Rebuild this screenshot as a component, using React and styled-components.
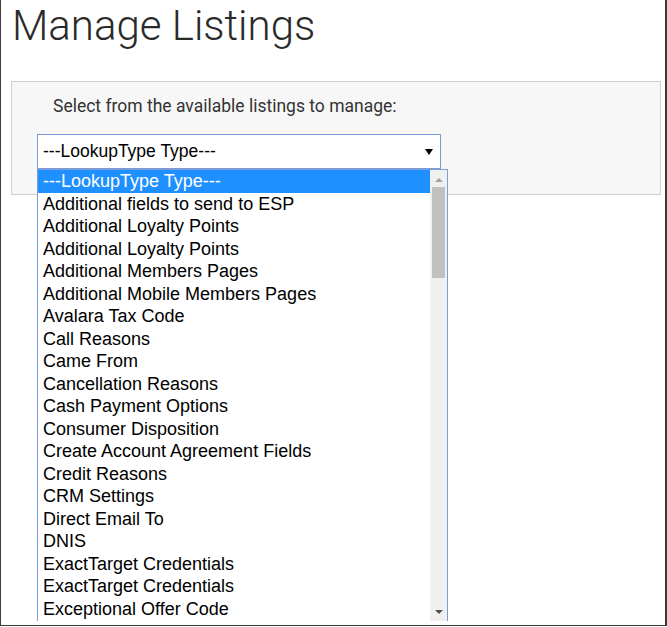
import styled, { createGlobalStyle } from "styled-components";

const GlobalStyle = createGlobalStyle`
  html, body {
    margin: 0;
    padding: 0;
    background: #fff;
  }
  * {
    box-sizing: border-box;
  }
`;

const listings = [
  "---LookupType Type---",
  "Additional fields to send to ESP",
  "Additional Loyalty Points",
  "Additional Loyalty Points",
  "Additional Members Pages",
  "Additional Mobile Members Pages",
  "Avalara Tax Code",
  "Call Reasons",
  "Came From",
  "Cancellation Reasons",
  "Cash Payment Options",
  "Consumer Disposition",
  "Create Account Agreement Fields",
  "Credit Reasons",
  "CRM Settings",
  "Direct Email To",
  "DNIS",
  "ExactTarget Credentials",
  "ExactTarget Credentials",
  "Exceptional Offer Code",
];

export default function App() {
  return (
    <>
      <GlobalStyle />
      <Frame>
        <Title>Manage Listings</Title>
        <Panel>
          <Label>Select from the available listings to manage:</Label>
          <SelectWrap>
            <SelectBox>
              <span>---LookupType Type---</span>
              <Caret />
            </SelectBox>
            <DropList>
              <Options>
                {listings.map((item, i) => (
                  <Option key={i} $active={i === 0}>
                    {item}
                  </Option>
                ))}
              </Options>
              <ScrollBar>
                <ArrowUp />
                <Thumb />
                <ArrowDown />
              </ScrollBar>
            </DropList>
          </SelectWrap>
        </Panel>
      </Frame>
    </>
  );
}

const Frame = styled.div`
  width: 667px;
  height: 626px;
  border-left: 1px solid #3c3c3c;
  border-right: 2px solid #3c3c3c;
  border-bottom: 1px solid #3c3c3c;
  padding: 0 4px 0 10px;
  overflow: hidden;
  position: relative;
`;

const Title = styled.h1`
  margin: 0;
  font-family: Roboto, "Liberation Sans", sans-serif;
  font-weight: 300;
  font-size: 42px;
  line-height: 52px;
  color: #2a2a2a;
  padding-left: 1px;
`;

const Panel = styled.div`
  margin-top: 29px;
  height: 114px;
  background: #f7f7f7;
  border: 1px solid #cfcfcf;
  padding: 12px 0 0 25px;
`;

const Label = styled.div`
  font-family: Roboto, "Liberation Sans", sans-serif;
  font-size: 17.5px;
  line-height: 24px;
  color: #333;
  padding-left: 16px;
`;

const SelectWrap = styled.div`
  position: relative;
  margin-top: 16px;
  width: 404px;
`;

const SelectBox = styled.div`
  height: 35px;
  display: flex;
  align-items: center;
  justify-content: space-between;
  background: #fff;
  border: 1px solid #7d9cd6;
  padding: 0 6px 0 5px;
  font-family: "Liberation Sans", Arial, sans-serif;
  font-size: 17.5px;
  color: #000;
`;

const Caret = styled.span`
  width: 0;
  height: 0;
  border-left: 4px solid transparent;
  border-right: 4px solid transparent;
  border-top: 6px solid #000;
  margin-right: 1px;
`;

const DropList = styled.div`
  position: absolute;
  top: 35px;
  left: 0;
  width: 411px;
  height: 452px;
  display: flex;
  background: #fff;
  border: 1px solid #7d9cd6;
  border-bottom: none;
`;

const Options = styled.ul`
  list-style: none;
  margin: 0;
  padding: 0;
  flex: 1;
  overflow: hidden;
`;

const Option = styled.li`
  height: 22.5px;
  line-height: 22.5px;
  padding-left: 5px;
  font-family: "Liberation Sans", Arial, sans-serif;
  font-size: 18px;
  white-space: nowrap;
  color: ${(p) => (p.$active ? "#fff" : "#000")};
  background: ${(p) => (p.$active ? "#1e90ff" : "transparent")};
`;

const ScrollBar = styled.div`
  width: 17px;
  background: #f0f0f0;
  display: flex;
  flex-direction: column;
  align-items: center;
  padding-top: 8px;
`;

const ArrowUp = styled.span`
  width: 0;
  height: 0;
  border-left: 4px solid transparent;
  border-right: 4px solid transparent;
  border-bottom: 4px solid #a3a3a3;
`;

const Thumb = styled.div`
  width: 13px;
  height: 91px;
  margin-top: 5px;
  background: #c1c1c1;
`;

const ArrowDown = styled.span`
  width: 0;
  height: 0;
  margin-top: 332px;
  border-left: 4px solid transparent;
  border-right: 4px solid transparent;
  border-top: 4px solid #505050;
`;
